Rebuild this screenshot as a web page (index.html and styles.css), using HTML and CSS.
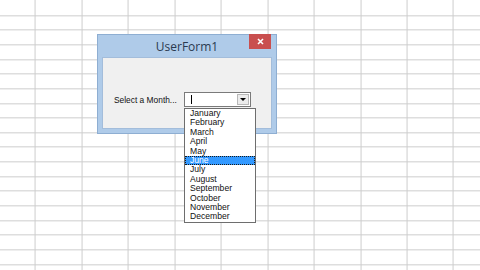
FILE: index.html
```html
<!DOCTYPE html>
<html>
<head>
<meta charset="utf-8">
<link rel="stylesheet" href="styles.css">
</head>
<body>
<div class="sheet">
  <div class="window">
    <div class="titlebar">
      <span class="title">UserForm1</span>
      <div class="close">
        <svg width="7" height="7" viewBox="0 0 7 7"><path d="M1 1L6 6M6 1L1 6" stroke="#fff" stroke-width="1.6"/></svg>
      </div>
    </div>
    <div class="client">
      <div class="row">
        <span class="label">Select a Month...</span>
        <div class="combo">
          <span class="caret"></span>
          <div class="dropbtn">
            <svg width="6" height="4" viewBox="0 0 6 4"><path d="M0 0H6L3 3Z" fill="#000"/></svg>
          </div>
        </div>
      </div>
    </div>
  </div>
  <ul class="list">
    <li>January</li>
    <li>February</li>
    <li>March</li>
    <li>April</li>
    <li>May</li>
    <li class="sel">June</li>
    <li>July</li>
    <li>August</li>
    <li>September</li>
    <li>October</li>
    <li>November</li>
    <li>December</li>
  </ul>
</div>
</body>
</html>
```
FILE: styles.css
```css
html, body {
  margin: 0;
  padding: 0;
  width: 480px;
  height: 270px;
  overflow: hidden;
  background: #fff;
}
.sheet {
  position: relative;
  width: 480px;
  height: 270px;
  background-color: #fff;
  background-image:
    repeating-linear-gradient(to right, transparent 0, transparent 45.45px, #cdcdcd 45.45px, #cdcdcd 46.45px),
    repeating-linear-gradient(to bottom, transparent 0, transparent 13.65px, #cdcdcd 13.65px, #cdcdcd 14.65px);
  background-position: -10.45px 0, 0 1.35px;
  font-family: "Liberation Sans", Arial, sans-serif;
}
.window {
  position: absolute;
  left: 97px;
  top: 34px;
  width: 180px;
  height: 100px;
  box-sizing: border-box;
  background: #afcbe9;
  border: 1px solid #8eaed2;
  display: flex;
  flex-direction: column;
  padding: 0 4px 4px 4px;
}
.titlebar {
  position: relative;
  height: 22px;
  display: flex;
  align-items: center;
  justify-content: center;
}
.title {
  font-family: "Open Sans", "Liberation Sans", sans-serif;
  font-size: 12px;
  color: #2a3a50;
}
.close {
  position: absolute;
  right: 1px;
  top: -1px;
  width: 22px;
  height: 15px;
  background: #c94f4f;
  display: flex;
  align-items: center;
  justify-content: center;
}
.client {
  flex: 1;
  background: #f0f0f0;
  border: 1px solid #a3bddb;
  padding: 34px 0 0 11px;
}
.row {
  display: flex;
  align-items: center;
  gap: 7px;
}
.label {
  font-size: 8.4px;
  color: #111;
}
.combo {
  width: 67px;
  height: 15px;
  box-sizing: border-box;
  background: #fff;
  border: 1px solid #7a7a7a;
  display: flex;
  align-items: center;
  justify-content: space-between;
  padding: 0 1px 0 6px;
}
.caret {
  width: 1px;
  height: 9px;
  background: #000;
}
.dropbtn {
  width: 12px;
  height: 11px;
  box-sizing: border-box;
  background: #ececec;
  border: 1px solid #b8b8b8;
  display: flex;
  align-items: center;
  justify-content: center;
}
.list {
  position: absolute;
  left: 184px;
  top: 108px;
  width: 72px;
  margin: 0;
  padding: 0;
  list-style: none;
  box-sizing: border-box;
  background: #fff;
  border: 1px solid #6e6e6e;
  font-size: 8.6px;
  color: #111;
}
.list li {
  height: 9.4px;
  line-height: 9.4px;
  padding-left: 5px;
  box-sizing: border-box;
}
.list li.sel {
  background: #3399ff;
  color: #fff;
  outline: 1px dotted #1a1a1a;
  outline-offset: -1px;
}
```
